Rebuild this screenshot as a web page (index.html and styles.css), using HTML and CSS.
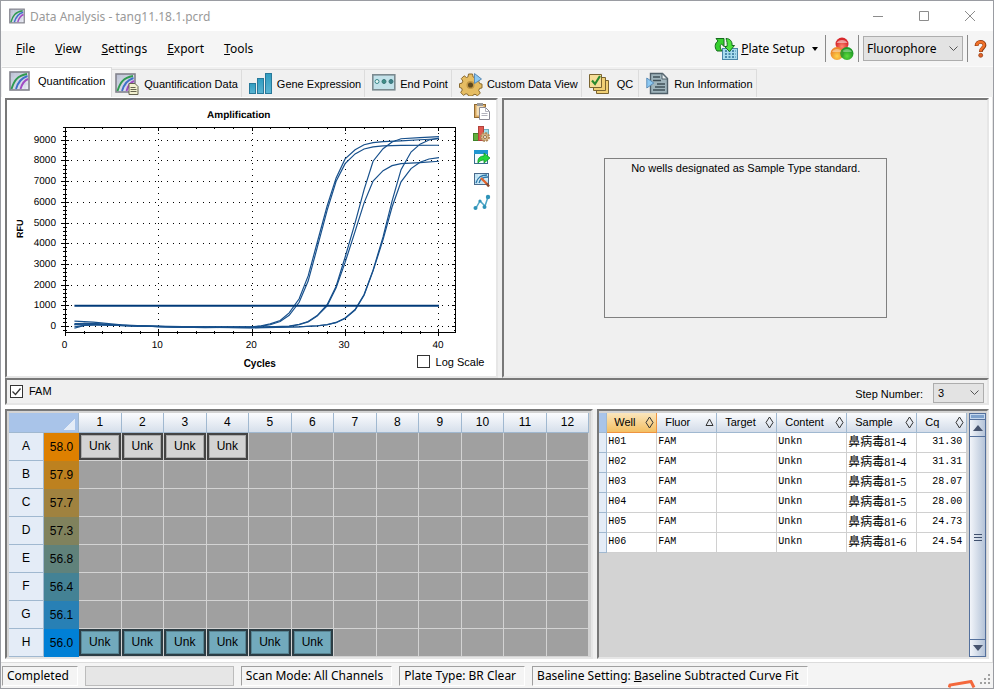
FILE: index.html
```html
<!DOCTYPE html>
<html lang="en">
<head>
  <meta charset="UTF-8" />
  <meta name="viewport" content="width=device-width, initial-scale=1" />
  <title>Data Analysis - tang11.18.1.pcrd</title>
  <link rel="stylesheet" href="styles.css">
</head>
<body>

  <!-- Shared icon parts -->
  <svg class="defs" width="0" height="0" aria-hidden="true">
    <defs>
      <linearGradient id="barFill" x1="0" x2="0" y1="0" y2="1">
        <stop offset="0" stop-color="#2f9cc0" />
        <stop offset="1" stop-color="#5bb4d2" />
      </linearGradient>
      <linearGradient id="chartFill" x1="0" x2="1" y1="0" y2="1">
        <stop offset="0" stop-color="#b9bfd2" />
        <stop offset="1" stop-color="#eceef6" />
      </linearGradient>
      <radialGradient id="redBall" cx=".5" cy=".7"><stop offset="0" stop-color="#ff8a70" /><stop offset="1" stop-color="#d8282c" /></radialGradient>
      <radialGradient id="orangeBall" cx=".5" cy=".7"><stop offset="0" stop-color="#ffd34a" /><stop offset="1" stop-color="#ec8a2c" /></radialGradient>
      <radialGradient id="greenBall" cx=".5" cy=".7"><stop offset="0" stop-color="#5fdc3c" /><stop offset="1" stop-color="#1f9a26" /></radialGradient>
      <symbol id="curves" viewBox="0 0 21 20">
        <rect x="1" y="1" width="19" height="18" fill="url(#chartFill)" stroke="#83838c" stroke-width="1.6" />
        <path d="M6 2v16M11 2v16M16 2v16M2 7h17M2 13h17" stroke="#cdd2e2" stroke-width=".7" />
        <path d="M2.500 18C5 10 8 4.500 18 3" fill="none" stroke="#2f9a50" stroke-width="1.900" />
        <path d="M7 18C9 11 12 7 18.500 5" fill="none" stroke="#3f70c8" stroke-width="1.900" />
        <path d="M11.500 18C13 13 15 9.500 19 8" fill="none" stroke="#a14bc4" stroke-width="1.900" />
      </symbol>
    </defs>
  </svg>

  <header class="titlebar">
    <svg class="app-icon" width="16" height="16"><use href="#curves" /></svg>
    <h1>Data Analysis - tang11.18.1.pcrd</h1>
    <div class="window-buttons">
      <button type="button" aria-label="Minimize"><svg width="12" height="12"><path d="M1 6.500h10" /></svg></button>
      <button type="button" aria-label="Maximize"><svg width="12" height="12"><path d="M1.500 1.500h9v9h-9z" /></svg></button>
      <button type="button" aria-label="Close"><svg width="12" height="12"><path d="M1 1l10 10M11 1L1 11" /></svg></button>
    </div>
  </header>

  <div class="menubar">
    <nav class="menu">
      <a href="#file"><u>F</u>ile</a>
      <a href="#view"><u>V</u>iew</a>
      <a href="#settings"><u>S</u>ettings</a>
      <a href="#export"><u>E</u>xport</a>
      <a href="#tools"><u>T</u>ools</a>
    </nav>
    <div class="tools">
      <button type="button" class="plate-setup">
        <svg width="24" height="24" viewBox="0 0 24 24">
          <rect x="8.500" y="11.500" width="15" height="11" fill="#a9dcee" stroke="#4a86a8" />
          <path d="M11 14h11M11 17h11M11 20h11" stroke="#2c6f98" stroke-width="1.700" stroke-dasharray="2 1.500" />
          <path d="M3 14C0 10 1 6 4 4L2 1.500h8v8L7.500 7C5.500 8.500 6 11 8 14z" fill="#37d02f" stroke="#146b1d" />
          <path d="M12 1.500c4 0 6.500 3 6 7l2.500 0-5 6-5-5h2.500c.5-3 0-5-1-8z" fill="#4be03c" stroke="#146b1d" />
        </svg>
        <span><u>P</u>late Setup</span>
        <svg class="drop" width="6" height="4"><path d="M0 0h6L3 4z" /></svg>
      </button>
      <span class="divider"></span>
      <button type="button" aria-label="Fluorophores">
        <svg width="24" height="24" viewBox="0 0 24 24">
          <circle cx="12" cy="7" r="6.500" fill="url(#redBall)" />
          <path d="M6.500 6a6 5 0 0 1 11 0z" fill="#fff" opacity=".5" />
          <circle cx="7" cy="16.500" r="6.500" fill="url(#orangeBall)" />
          <path d="M2 15a5.500 5 0 0 1 10 0z" fill="#fff" opacity=".4" />
          <circle cx="17" cy="16.500" r="6.500" fill="url(#greenBall)" />
          <path d="M12 15a5.500 5 0 0 1 10 0z" fill="#fff" opacity=".35" />
          <path d="M12 12.300a6.500 6.500 0 0 1 0 8.400a6.500 6.500 0 0 1 0-8.400z" fill="#3b9b2e" />
        </svg>
      </button>
      <span class="divider"></span>
      <select class="drop-list" aria-label="Analysis mode"><option>Fluorophore</option></select>
      <span class="divider"></span>
      <button type="button" class="help" aria-label="Help">
        <svg width="14" height="18" viewBox="0 0 14 18">
          <path d="M2.500 6C2.500 0.700 10.500 0.700 10.500 5.200C10.500 8.200 6.800 8 6.800 12" fill="none" stroke="#8e3a10" stroke-width="3.800" />
          <path d="M2.500 5.500C3 1 10.200 1 10.200 5C10.200 8 6.600 8 6.600 11.500" fill="none" stroke="#f0712a" stroke-width="2.400" />
          <circle cx="6.700" cy="15.300" r="2" fill="#e0622a" stroke="#8e3a10" stroke-width=".7" />
        </svg>
      </button>
    </div>
  </div>

  <div class="tabs" role="tablist">
    <button type="button" role="tab" class="tab active" aria-selected="true">
      <svg width="21" height="20"><use href="#curves" /></svg>
      Quantification
    </button>
    <button type="button" role="tab" class="tab tab-data">
      <svg width="24" height="24">
        <use href="#curves" y="1" width="21" height="20" />
        <path d="M14 11.500h6l3 3v8h-9z" fill="#f2f0cf" stroke="#66644f" />
        <path d="M15.500 15.500h5M15.500 17.500h6M15.500 19.500h6" stroke="#66644f" />
      </svg>
      Quantification Data
    </button>
    <button type="button" role="tab" class="tab">
      <svg width="24" height="24">
        <g fill="url(#barFill)" stroke="#28799a">
          <rect x=".5" y="11.500" width="6" height="10" />
          <rect x="8.500" y="6.500" width="6" height="15" />
          <rect x="16.500" y="1.500" width="6" height="20" />
        </g>
      </svg>
      Gene Expression
    </button>
    <button type="button" role="tab" class="tab">
      <svg width="24" height="24">
        <rect x=".8" y="2.800" width="22" height="15" fill="#c3e2ea" stroke="#7b8a90" stroke-width="1.600" />
        <circle cx="5" cy="9.500" r="2" fill="#e5f6f4" stroke="#39878a" />
        <circle cx="12" cy="9.500" r="2" fill="#3e8f88" stroke="#39777a" />
        <circle cx="19" cy="9.500" r="2" fill="#3e7f88" stroke="#39777a" />
      </svg>
      End Point
    </button>
    <button type="button" role="tab" class="tab">
      <svg width="24" height="24">
        <path d="M9.500 2h4l.6 3 2 .9 2.600-1.700 2.800 2.800-1.700 2.600.9 2 2.300.5v3.800l-2.500.6-.8 2 1.600 2.500-2.800 2.800-2.500-1.600-2 .8-.5 1h-4l-.5-1.500-2-.8-2.500 1.600-2.800-2.800 1.600-2.500-.8-2L.5 15.500v-3.800l2.500-.6.9-2-1.600-2.500 2.800-2.800L7.500 5.500l1.500-.6z" fill="#e6bd63" stroke="#8a6a2e" />
        <circle cx="11.500" cy="13" r="3.300" fill="#5f4a1f" stroke="#c29846" stroke-width="1.500" />
        <path d="M15.500 1.500v10l7-4.500z" fill="#8cc8f2" stroke="#5c8db8" />
      </svg>
      Custom Data View
    </button>
    <button type="button" role="tab" class="tab tab-qc">
      <svg width="20" height="24">
        <g fill="#f0cf74" stroke="#7a6430">
          <path d="M7.500 8.500h12v13h-12z" />
          <path d="M4.500 5.500h12v13h-12z" />
          <path d="M.5 2.500h12v13H.5z" fill="#f6de98" />
        </g>
        <path d="M3 8.500l3 3.500 5-8" fill="none" stroke="#2b8a2f" stroke-width="2.200" />
      </svg>
      QC
    </button>
    <button type="button" role="tab" class="tab">
      <svg width="24" height="24">
        <path d="M4.500 1.500h12l5 5v15h-17z" fill="#9fb4bc" stroke="#50606a" stroke-width="1.400" />
        <path d="M16 1.500v5.500h5.500z" fill="#e6eef0" stroke="#50606a" />
        <path d="M7 5h7M7 8.500h8M11 12h8M9 15h10M7 18h12" stroke="#405058" stroke-width="1.600" />
        <path d="M.8 6v10l7-5z" fill="#8cc8f2" stroke="#5c8db8" />
      </svg>
      Run Information
    </button>
  </div>

  <main class="workspace">
    <section class="upper">
      <div class="pane chart-pane">
        <div class="chart-body">
          <svg id="amplification" class="chart" viewBox="7 100 466 252" role="img" aria-label="Amplification"></svg>
          <div class="chart-tools">
            <button type="button" aria-label="Copy">
              <svg width="18" height="18">
                <rect x="1.500" y="2.500" width="11" height="13" fill="#d9a860" stroke="#8f6a34" />
                <rect x="3.500" y="3.500" width="7" height="10" fill="#f3dfb8" />
                <rect x="4" y="1" width="6" height="3" fill="#9a9a9a" />
                <path d="M6.500 5.500h6l4 4v8h-10z" fill="#fff" stroke="#8b8b96" />
                <path d="M12.500 5.500v4h4M8.500 11.500h6M8.500 13.500h6" fill="none" stroke="#b3b3bd" />
              </svg>
            </button>
            <button type="button" aria-label="Chart settings">
              <svg width="18" height="18">
                <rect x="10.500" y="4.500" width="5" height="6" fill="#9fdcec" stroke="#6baebd" />
                <rect x=".5" y="8.500" width="5" height="7" fill="#62ae3c" stroke="#3d8427" />
                <rect x="5.500" y="1.500" width="5" height="14" fill="#df5a50" stroke="#b2423c" />
                <circle cx="12" cy="12" r="4" fill="#d9b88b" stroke="#b08b5a" stroke-width="2" stroke-dasharray="2 1.100" />
                <circle cx="12" cy="12" r="1.500" fill="#fff" stroke="#94703f" />
              </svg>
            </button>
            <button type="button" aria-label="Export view">
              <svg width="18" height="18">
                <rect x="1.500" y="2.500" width="13" height="13" fill="#f4fbff" stroke="#3a6e8c" />
                <path d="M1 2h14v4H1z" fill="#1f96d0" />
                <path d="M5 15c-.5-5 2-7 6-7V5l6 5-6 5v-3c-3 0-4 1-6 3z" fill="#22d83c" stroke="#15932a" stroke-width=".8" />
              </svg>
            </button>
            <button type="button" aria-label="Edit trace style">
              <svg width="18" height="18">
                <rect x="1.500" y="2.500" width="14" height="11" fill="#bfe3f4" stroke="#4a6a8c" />
                <path d="M2 8h13M6 3v10M11 3v10" stroke="#e8f6fc" />
                <path d="M3 12C5 6 8 4 14 4M6 12c1-4 4-6 9-6" fill="none" stroke="#2b76a8" stroke-width="1.300" />
                <path d="M8 7l6 6" stroke="#e2642c" stroke-width="2.400" />
                <path d="M13.500 12.500l2.500 3" stroke="#8a4a30" stroke-width="2.400" />
              </svg>
            </button>
            <button type="button" aria-label="Trace">
              <svg width="18" height="18">
                <path d="M3 14L7 7l5 5 3-9" fill="none" stroke="#4ea6c6" stroke-width="1.500" />
                <g fill="#2f93b8"><circle cx="2.500" cy="14" r="2" /><circle cx="7" cy="7" r="1.600" /><circle cx="11.500" cy="13" r="2" /><circle cx="15" cy="3" r="2.200" /></g>
              </svg>
            </button>
          </div>
        </div>
        <div class="chart-footer">
          <span class="axis-title">Cycles</span>
          <label class="check"><input type="checkbox"> Log Scale</label>
        </div>
      </div>

      <div class="pane standard-pane">
        <p class="notice">No wells designated as Sample Type standard.</p>
      </div>
    </section>

    <section class="pane step-bar">
      <label class="check"><input type="checkbox" checked> FAM</label>
      <div class="step">
        <label for="step">Step Number:</label>
        <select id="step" class="drop-list"><option>3</option></select>
      </div>
    </section>

    <section class="lower">
      <div class="pane plate-pane">
        <table class="plate">
          <colgroup><col class="row-col"><col class="temp-col"></colgroup>
          <thead>
            <tr><th colspan="2" class="corner"></th><th>1</th><th>2</th><th>3</th><th>4</th><th>5</th><th>6</th><th>7</th><th>8</th><th>9</th><th>10</th><th>11</th><th>12</th></tr>
          </thead>
          <tbody>
            <tr><th>A</th><td class="t580">58.0</td><td class="well">Unk</td><td class="well">Unk</td><td class="well">Unk</td><td class="well">Unk</td><td></td><td></td><td></td><td></td><td></td><td></td><td></td><td></td></tr>
            <tr><th>B</th><td class="t579">57.9</td><td></td><td></td><td></td><td></td><td></td><td></td><td></td><td></td><td></td><td></td><td></td><td></td></tr>
            <tr><th>C</th><td class="t577">57.7</td><td></td><td></td><td></td><td></td><td></td><td></td><td></td><td></td><td></td><td></td><td></td><td></td></tr>
            <tr><th>D</th><td class="t573">57.3</td><td></td><td></td><td></td><td></td><td></td><td></td><td></td><td></td><td></td><td></td><td></td><td></td></tr>
            <tr><th>E</th><td class="t568">56.8</td><td></td><td></td><td></td><td></td><td></td><td></td><td></td><td></td><td></td><td></td><td></td><td></td></tr>
            <tr><th>F</th><td class="t564">56.4</td><td></td><td></td><td></td><td></td><td></td><td></td><td></td><td></td><td></td><td></td><td></td><td></td></tr>
            <tr><th>G</th><td class="t561">56.1</td><td></td><td></td><td></td><td></td><td></td><td></td><td></td><td></td><td></td><td></td><td></td><td></td></tr>
            <tr><th>H</th><td class="t560">56.0</td><td class="well fam">Unk</td><td class="well fam">Unk</td><td class="well fam">Unk</td><td class="well fam">Unk</td><td class="well fam">Unk</td><td class="well fam">Unk</td><td></td><td></td><td></td><td></td><td></td><td></td></tr>
          </tbody>
        </table>
      </div>

      <div class="pane result-pane">
        <div class="result-scroll">
          <table class="results">
            <colgroup><col class="handle-col"><col class="w50"><col class="w60"><col class="w60"><col class="w70"><col class="w70"><col class="w50"></colgroup>
            <thead>
              <tr>
                <th class="handle"></th>
                <th class="sorted"><div>Well <svg width="9" height="13"><path d="M4.500 1l3.500 5.500-3.500 5.500L1 6.500z" /></svg></div></th>
                <th><div>Fluor <svg width="9" height="13"><path d="M4.500 3L8 9.500H1z" /></svg></div></th>
                <th><div>Target <svg width="9" height="13"><path d="M4.500 1l3.500 5.500-3.500 5.500L1 6.500z" /></svg></div></th>
                <th><div>Content <svg width="9" height="13"><path d="M4.500 1l3.500 5.500-3.500 5.500L1 6.500z" /></svg></div></th>
                <th><div>Sample <svg width="9" height="13"><path d="M4.500 1l3.500 5.500-3.500 5.500L1 6.500z" /></svg></div></th>
                <th><div>Cq <svg width="9" height="13"><path d="M4.500 1l3.500 5.500-3.500 5.500L1 6.500z" /></svg></div></th>
              </tr>
            </thead>
            <tbody>
              <tr><td class="handle"></td><td>H01</td><td>FAM</td><td></td><td>Unkn</td><td class="sample">鼻病毒81-4</td><td class="num">31.30</td></tr>
              <tr><td class="handle"></td><td>H02</td><td>FAM</td><td></td><td>Unkn</td><td class="sample">鼻病毒81-4</td><td class="num">31.31</td></tr>
              <tr><td class="handle"></td><td>H03</td><td>FAM</td><td></td><td>Unkn</td><td class="sample">鼻病毒81-5</td><td class="num">28.07</td></tr>
              <tr><td class="handle"></td><td>H04</td><td>FAM</td><td></td><td>Unkn</td><td class="sample">鼻病毒81-5</td><td class="num">28.00</td></tr>
              <tr><td class="handle"></td><td>H05</td><td>FAM</td><td></td><td>Unkn</td><td class="sample">鼻病毒81-6</td><td class="num">24.73</td></tr>
              <tr><td class="handle"></td><td>H06</td><td>FAM</td><td></td><td>Unkn</td><td class="sample">鼻病毒81-6</td><td class="num">24.54</td></tr>
            </tbody>
          </table>
        </div>
        <div class="scrollbar">
          <span class="split"></span>
          <button type="button" aria-label="Scroll up"><svg width="10" height="6"><path d="M5 0l5 6H0z" /></svg></button>
          <span class="thumb"><svg width="8" height="8"><path d="M0 .5h8M0 3.500h8M0 6.500h8" stroke="#3f506e" /></svg></span>
          <button type="button" aria-label="Scroll down"><svg width="10" height="6"><path d="M5 6l5-6H0z" /></svg></button>
        </div>
      </div>
    </section>
  </main>

  <footer class="statusbar">
    <span class="status">Completed</span>
    <span class="progress"></span>
    <span class="status">Scan Mode: All Channels</span>
    <span class="status">Plate Type: BR Clear</span>
    <span class="status">Baseline Setting: <u>B</u>aseline Subtracted Curve Fit</span>
    <svg class="grip" width="11" height="11"><path d="M9 1h2M9 5h2M5 5h2M9 9h2M5 9h2M1 9h2" /></svg>
    <svg class="mark" width="30" height="8"><path d="M1 7.500L2 5 23 1.500l3 6" /></svg>
  </footer>

  <script src="chart.js"></script>
</body>
</html>
```

FILE: styles.css
```css
* {
  box-sizing: border-box;
}
html, body {
  height: 100%;
  margin: 0;
}
body {
  display: flex;
  flex-direction: column;
  min-height: 100vh;
  background-color: #f0f0f0;
  border: 1px solid #9a9ca2;
  color: #000;
  font-family: "Liberation Sans", Arial, sans-serif;
  font-size: 11px;
}
button, select, input {
  font: inherit;
  color: inherit;
  margin: 0;
}
button {
  background: none;
  border: none;
  padding: 0;
}
svg {
  display: block;
  flex-shrink: 0;
}
.defs {
  position: absolute;
}

/* Title bar */
.titlebar {
  display: flex;
  align-items: center;
  height: 30px;
  padding-left: 8px;
  gap: 5px;
  background-color: #fff;
  flex-shrink: 0;
}
.titlebar h1 {
  margin: 0;
  font-family: "Noto Sans", sans-serif;
  font-size: 12px;
  font-weight: 400;
  color: #999;
}
.window-buttons {
  display: flex;
  margin-left: auto;
}
.window-buttons button {
  display: flex;
  justify-content: center;
  width: 46px;
}
.window-buttons path {
  fill: none;
  stroke: #8c8c8c;
}

/* Menu */
.menubar {
  display: flex;
  justify-content: space-between;
  height: 35px;
  padding: 0 5px 0 15px;
  background-color: #f5f5f5;
  flex-shrink: 0;
  font-family: "Noto Sans", sans-serif;
  font-size: 12px;
}
.menu, .tools {
  display: flex;
  align-items: center;
}
.menu {
  gap: 20px;
}
.menu a {
  color: #000;
  text-decoration: none;
}
.tools {
  gap: 4px;
}
.plate-setup {
  display: flex;
  align-items: center;
  gap: 3px;
}
.drop {
  margin: 0 3px 0 4px;
}
.divider {
  width: 1px;
  height: 27px;
  background-color: #8a8a8a;
}
.help {
  margin-left: 2px;
}
.drop-list {
  appearance: none;
  height: 25px;
  padding: 0 4px;
  border: 1px solid #adadad;
  border-radius: 0;
  background: #e3e3e3 url("data:image/svg+xml,%3Csvg xmlns='http://www.w3.org/2000/svg' width='9' height='6'%3E%3Cpath d='M.5 .5l4 4 4-4' fill='none' stroke='%23555'/%3E%3C/svg%3E") no-repeat right 4px center;
}
.tools .drop-list {
  width: 100px;
  padding: 0 3px;
}

/* Tabs */
.tabs {
  display: flex;
  align-items: flex-end;
  height: 31px;
  padding-left: 1px;
  border-top: 1px solid #fafafa;
  flex-shrink: 0;
}
.tab {
  display: flex;
  align-items: center;
  gap: 4px;
  height: 28px;
  padding: 1px 3px 0 7px;
  border: 1px solid #dcdcdc;
  border-width: 1px 1px 0 0;
}
.tab-data {
  gap: 5px;
  padding-left: 3px;
}
.tab-qc {
  gap: 8px;
  padding-right: 5px;
}
.tab.active {
  gap: 8px;
  height: 30px;
  padding: 0 6px 3px 7px;
  background-color: #fff;
}

/* Panes */
.workspace {
  display: flex;
  flex-direction: column;
  flex: 1;
  padding: 1px 3px 3px 4px;
  background-color: #fff;
  border-right: 1px solid #e6e6e6;
}
.pane {
  border: 2px solid;
  border-color: #787878 #e6e6e6 #e6e6e6 #787878;
  background-color: #f0f0f0;
}
.upper, .lower {
  display: flex;
  gap: 4px;
  background-color: #f0f0f0;
}
.chart-pane, .standard-pane {
  min-width: 0;
}
.chart-pane {
  flex: 494 1 0;
  background-color: #fff;
}
.standard-pane {
  flex: 487 1 0;
}
.chart-body {
  display: flex;
}
.chart {
  flex: 1;
  min-width: 0;
}
.chart text {
  text-rendering: geometricPrecision;
}
.chart .heading {
  font-weight: 700;
}
.chart .grid {
  stroke-dasharray: 1 5;
}
.chart .axis, .chart .grid {
  fill: none;
  stroke: #000;
  shape-rendering: crispEdges;
}
.chart .trace {
  fill: none;
  stroke: #17508c;
  stroke-width: 1.2;
}
.chart .threshold {
  stroke: #003a78;
  stroke-width: 2;
}
.chart-tools {
  display: flex;
  flex-direction: column;
  gap: 5px;
  width: 24px;
  padding: 2px 0 0 1px;
}
.chart-footer {
  display: flex;
  align-items: center;
  height: 24px;
  padding: 0 12px 4px 96px;
}
.axis-title {
  flex: 1;
  padding-top: 3px;
  font-size: 10px;
  font-weight: 700;
  text-align: center;
}
.check {
  display: flex;
  align-items: center;
  gap: 6px;
}
.check input {
  appearance: none;
  width: 13px;
  height: 13px;
  border: 1px solid #333;
  background-color: #fff;
}
.check input:checked {
  background: #fff url("data:image/svg+xml,%3Csvg xmlns='http://www.w3.org/2000/svg' width='11' height='11'%3E%3Cpath d='M1.500 5.500l3 3 5-6' fill='none' stroke='%23333' stroke-width='1.300'/%3E%3C/svg%3E") center no-repeat;
}
.standard-pane {
  display: flex;
  align-items: center;
  justify-content: center;
}
.notice {
  width: 283px;
  height: 160px;
  margin: 0;
  padding-top: 3px;
  border: 1px solid #808080;
  text-align: center;
}
.step-bar {
  display: flex;
  justify-content: space-between;
  height: 27px;
  padding: 0 3px;
  margin: 0 0 4px;
}
.step {
  display: flex;
  align-items: flex-end;
  gap: 10px;
}
.step label {
  padding-bottom: 3px;
}
.step .drop-list {
  width: 51px;
  height: 20px;
}

/* Plate */
.lower {
  flex: 1;
}
.plate-pane {
  flex: 588 1 0;
  min-width: 0;
  padding: 2px 2px 0;
  background-color: #d3d3d3;
}
.plate {
  width: 100%;
  table-layout: fixed;
  border-collapse: separate;
  border-spacing: 0;
  font-size: 12px;
  text-align: center;
}
.row-col {
  width: 35px;
}
.temp-col {
  width: 35px;
}
.plate th, .plate td {
  height: 28px;
  padding: 0;
  border: 1px solid #d3d3d3;
  border-width: 0 1px 1px 0;
  background-color: #a0a0a0;
}
.plate th {
  font-weight: 400;
  background-color: #e4ecf7;
  border-color: #a0b8d0;
}
.plate thead th {
  height: 20px;
  background: linear-gradient(#fbfcfe, #d6dfeb);
}
.plate thead .corner {
  background: linear-gradient(135deg, transparent 50%, #e4ecf7 50%) right 3px bottom 2px / 11px 11px no-repeat #a9c4e9;
}
.plate td:nth-child(2) {
  border: none;
}
.plate .well {
  background-color: #d3d3d3;
  box-shadow: inset 0 0 0 2px #444, inset 0 0 0 3px #aaa;
}
.plate .fam {
  background-color: #72aabc;
  box-shadow: inset 0 0 0 2px #2c3d44, inset 0 0 0 3px #588593;
}
.plate .t580 { background-color: #de8000; }
.plate .t579 { background-color: #bd811f; }
.plate .t577 { background-color: #a0823f; }
.plate .t573 { background-color: #80825d; }
.plate .t568 { background-color: #60827b; }
.plate .t564 { background-color: #448295; }
.plate .t561 { background-color: #2880b5; }
.plate .t560 { background-color: #0080d6; }

/* Results */
.result-pane {
  flex: 393 1 0;
  min-width: 0;
  display: flex;
  justify-content: space-between;
  padding-top: 2px;
  background-color: #d3d3d3;
}
.results {
  table-layout: fixed;
  width: 368px;
  border-collapse: separate;
  border-spacing: 0;
}
.handle-col { width: 8px; }
.w50 { width: 50px; }
.w60 { width: 60px; }
.w70 { width: 70px; }
.results th, .results td {
  height: 20px;
  padding: 0 1px;
  border: 1px solid #d0d0d0;
  border-width: 0 1px 1px 0;
  background-color: #fff;
}
.results th {
  padding: 0 2px 0 8px;
  font-weight: 400;
  border-color: #a0b8d0;
  background: linear-gradient(#fbfcfe, #d3dce9);
}
.results th div {
  display: flex;
  align-items: center;
  justify-content: space-between;
}
.results th path {
  fill: none;
  stroke: #333;
}
.results th.sorted {
  padding-left: 7px;
  border-color: #ee9340;
  background: linear-gradient(#fbe6bd, #f3bf63);
}
.results td {
  font-family: "Liberation Mono", monospace;
  font-size: 10px;
  line-height: 12px;
  white-space: nowrap;
}
.results .handle {
  padding: 0;
  border-color: #a0b8d0;
  background: #e4ecf7;
}
.results th.handle {
  background: #a9c4e9;
}
.results .sample {
  font-family: "Liberation Serif", "Noto Sans CJK SC", serif;
  font-size: 12px;
}
.results .num {
  padding-right: 4px;
  text-align: right;
}
.scrollbar {
  display: flex;
  flex-direction: column;
  width: 17px;
  margin-right: 1px;
  border: 1px solid #54709c;
  background-color: #54709c;
  gap: 1px;
}
.split {
  height: 5px;
  border: 1px solid #c5d8ee;
  background-color: #7fa2cc;
}
.scrollbar button, .thumb {
  display: flex;
  align-items: center;
  justify-content: center;
  height: 16px;
  background: linear-gradient(90deg, #f2f5fa, #b4c3d8);
}
.scrollbar button path {
  fill: #46536e;
}
.thumb {
  flex: 1;
}

/* Status bar */
.statusbar {
  position: relative;
  display: flex;
  align-items: center;
  gap: 7px;
  height: 26px;
  padding: 1px;
  border-top: 1px solid #dcdcdc;
  background-color: #f4f4f4;
  flex-shrink: 0;
  font-family: "Noto Sans", sans-serif;
  font-size: 12px;
}
.status {
  height: 20px;
  padding: 0 8px 0 4px;
  border: 1px solid;
  border-color: #a0a0a0 #fff #fff #a0a0a0;
  line-height: 18px;
  white-space: nowrap;
}
.progress {
  width: 149px;
  height: 20px;
  border: 1px solid #bcbcbc;
  background-color: #e6e6e6;
}
.grip {
  margin: 8px 2px 0 auto;
}
.grip path {
  stroke: #a0a0a0;
  stroke-width: 2;
}
.mark {
  position: absolute;
  right: 15px;
  bottom: 0;
}
.mark path {
  fill: none;
  stroke: #f4683c;
  stroke-width: 3;
}
```

FILE: chart.js
```javascript
const SVG_NS = "http://www.w3.org/2000/svg";
const chart = document.getElementById("amplification");

// plot frame
const LEFT = 65.5, RIGHT = 456.5, TOP = 127.5, BOTTOM = 332.5;

const px = cycle => Math.round(65 + cycle * 9.34) + 0.5;
const py = rfu => Math.round(326 - rfu * 0.0207) + 0.5;

function add(name, attrs, text) {
  const el = document.createElementNS(SVG_NS, name);
  for (const key in attrs) el.setAttribute(key, attrs[key]);
  if (text !== undefined) el.textContent = text;
  chart.appendChild(el);
}

// grid, ticks and labels
let axis = `M${LEFT - 2} ${TOP}H${RIGHT}V${BOTTOM}H${LEFT}V${TOP}`;
for (let v = -200; v <= 9400; v += 200) {
  const major = v % 1000 === 0;
  const y = py(v);
  axis += `M${LEFT - (major ? 4 : 2)} ${y}H${LEFT + (major ? 4 : 2)}`;
  axis += `M${RIGHT - (major ? 4 : 2)} ${y}H${RIGHT}`;
  if (major) {
    add("path", { class: "grid", d: `M71 ${y}H${RIGHT}` });
    add("text", { x: 56, y: y + 2.5, "text-anchor": "end", "font-size": 10 }, v);
  }
}
for (let c = 0; c <= 40; c += 2) {
  const major = c % 10 === 0;
  const x = px(c);
  axis += `M${x} ${BOTTOM - (major ? 3 : 1)}V${BOTTOM + (major ? 4 : 2)}`;
  axis += `M${x} ${TOP}V${TOP + (major ? 4 : 2)}`;
  if (major) {
    if (c > 0) add("path", { class: "grid", d: `M${x} 133V${BOTTOM}` });
    add("text", { x: x - 1, y: 348, "text-anchor": "middle", "font-size": 10 }, c);
  }
}
add("path", { class: "axis", d: axis });

// RFU by cycle, one list per well
const traces = [
  [[1, 220], [3, 180], [6, 40], [10, -40], [15, -90], [20, -60], [21, 0], [22, 90], [23, 250], [24, 620], [25, 1300], [26, 2400], [27, 4000], [28, 5770], [29, 7120], [30, 8036], [31, 8480], [32, 8720], [33, 8820], [34, 8870], [36, 8910], [38, 8960], [40, 9010]],
  [[1, 50], [2, 120], [5, 40], [10, -50], [15, -60], [20, -60], [21, -20], [22, 50], [23, 200], [24, 500], [25, 1130], [26, 2150], [27, 3750], [28, 5560], [29, 6960], [30, 7810], [31, 8277], [32, 8520], [33, 8613], [34, 8660], [36, 8690], [40, 8695]],
  [[1, -120], [2, 20], [4, 60], [8, -20], [14, -80], [20, -80], [24, -20], [25, 70], [26, 200], [27, 490], [28, 1010], [29, 1900], [30, 3300], [31, 4950], [32, 6560], [33, 7925], [34, 8530], [35, 8850], [36, 9010], [38, 9060], [40, 9110]],
  [[1, 100], [3, 110], [6, 10], [12, -60], [20, -90], [24, -30], [25, 50], [26, 190], [27, 460], [28, 960], [29, 1830], [30, 3050], [31, 4550], [32, 5920], [33, 6970], [34, 7475], [35, 7715], [36, 7810], [38, 7860], [40, 7925]],
  [[1, -60], [3, 80], [7, 0], [12, -60], [20, -100], [25, -60], [27, 0], [28, 60], [29, 160], [30, 370], [31, 780], [32, 1500], [33, 2680], [34, 4280], [35, 6000], [36, 7520], [37, 8370], [38, 8750], [39, 8950], [40, 9040]],
  [[1, 60], [3, 40], [8, -10], [14, -60], [20, -70], [25, -50], [27, -10], [28, 50], [29, 150], [30, 350], [31, 750], [32, 1470], [33, 2640], [34, 4150], [35, 5720], [36, 6930], [37, 7570], [38, 7880], [39, 8030], [40, 8100]]
];
traces.forEach(points => {
  add("polyline", { class: "trace", points: points.map(([c, v]) => `${px(c)},${(326 - v * 0.02078).toFixed(1)}`).join(" ") });
});
add("path", { class: "threshold", d: `M${px(1)} 306H${px(40)}` });

add("text", { class: "heading", x: 239, y: 118, "text-anchor": "middle", "font-size": 10 }, "Amplification");
add("text", { class: "heading", x: 0, y: 0, "text-anchor": "middle", "font-size": 9, transform: "translate(23 229) rotate(-90)" }, "RFU");
```
